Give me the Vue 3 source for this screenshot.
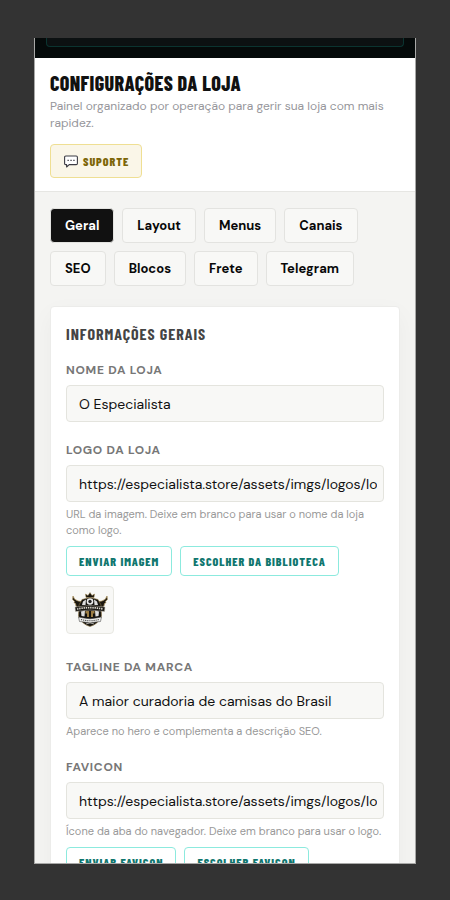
<script setup>
import { ref } from 'vue'

const tabs = ['Geral', 'Layout', 'Menus', 'Canais', 'SEO', 'Blocos', 'Frete', 'Telegram']
const active = ref('Geral')
const storeName = ref('O Especialista')
const logoUrl = ref('https://especialista.store/assets/imgs/logos/logo.png')
const tagline = ref('A maior curadoria de camisas do Brasil')
const faviconUrl = ref('https://especialista.store/assets/imgs/logos/logo.png')
</script>

<template>
  <div class="page">
    <div class="window">
      <div class="topbar"><div class="topbar-box"></div></div>

      <header class="header">
        <h1 class="title">Configurações da loja</h1>
        <p class="subtitle">Painel organizado por operação para gerir sua loja com mais rapidez.</p>
        <button type="button" class="support">
          <svg class="support-icon" viewBox="0 0 14 13" aria-hidden="true">
            <path d="M1.800 1h10.400q1.200 0 1.200 1.200v6.200q0 1.200-1.200 1.200H5.200L2.600 12V9.600H1.800Q.6 9.600.6 8.400V2.200Q.6 1 1.800 1Z" fill="#fff" stroke="#3c3c44" stroke-width="1.100" stroke-linejoin="round" />
            <path d="M3.500 4.700h1.300v1.300H3.500zM6.400 4.700h1.300v1.300H6.400zM9.300 4.700h1.300v1.300H9.300z" fill="#3c3c44" />
          </svg>
          <span>Suporte</span>
        </button>
      </header>

      <main class="main">
        <nav class="tabs">
          <button
            v-for="tab in tabs"
            :key="tab"
            type="button"
            class="tab"
            :class="{ active: tab === active }"
            @click="active = tab"
          >{{ tab }}</button>
        </nav>

        <section class="card">
          <h2 class="card-title">Informações gerais</h2>

          <div class="field">
            <label class="label" for="store-name">Nome da loja</label>
            <input id="store-name" v-model="storeName" class="input" type="text" />
          </div>

          <div class="field">
            <label class="label" for="logo-url">Logo da loja</label>
            <input id="logo-url" v-model="logoUrl" class="input" type="text" />
            <p class="hint">URL da imagem. Deixe em branco para usar o nome da loja como logo.</p>
            <div class="actions">
              <button type="button" class="action">Enviar imagem</button>
              <button type="button" class="action">Escolher da biblioteca</button>
            </div>
            <div class="thumb">
              <svg class="crest" viewBox="0 0 36 36" aria-hidden="true">
                <path d="M1 4Q2 8 6 9L12 10 11 16 5 16Q5 14 3.500 13L4 12 2 10.500 2.600 9.500.6 7.500Z" fill="#1b1710" stroke="#a58a52" stroke-width=".7" />
                <path d="M35 4Q34 8 30 9L24 10 25 16 31 16Q31 14 32.500 13L32 12 34 10.500 33.400 9.500 35.400 7.500Z" fill="#1b1710" stroke="#a58a52" stroke-width=".7" />
                <path d="M14 5.500 13.500 2 16 3.500 18 .6 20 3.500 22.500 2 22 5.500Z" fill="#17130c" stroke="#a58a52" stroke-width=".5" />
                <path d="M18 5.500 26 7.500 29 13 29.500 24Q26 32.500 18 34.500 10 32.500 6.500 24L7 13 10 7.500Z" fill="#15130f" stroke="#8e7747" stroke-width=".6" />
                <path d="M11 9.500 14 7.500 13.500 13H10ZM25 9.500 22 7.500 22.500 13H26ZM9 19.500 13 18.500 12.500 24.500 9.500 24ZM27 19.500 23 18.500 23.500 24.500 26.500 24Z" fill="#dedede" />
                <circle cx="18" cy="9.500" r="3.300" fill="#eee" />
                <circle cx="18" cy="9.500" r="1.700" fill="#222" />
                <path d="M3 15Q18 12 33 15L32.500 19.500Q18 16.500 3.500 19.500Z" fill="#1a1814" stroke="#bcb7ab" stroke-width=".5" />
                <path d="M5 17Q18 14.400 31 17" fill="none" stroke="#ddd9cf" stroke-width="1.700" stroke-dasharray="1.400 .8" />
                <path d="M13.500 19H17V25H15V21.500H13.500ZM19 19H22.500V21.500H21V25H19Z" fill="#9b7c43" />
                <path d="M6.500 25 12 26Q18 27.500 24 26L29.500 25 28.500 29.500 24 30Q18 31.500 12 30L7.500 29.500Z" fill="#efefed" stroke="#333" stroke-width=".5" />
                <path d="M9 27.500Q18 30 27 27.500" fill="none" stroke="#444" stroke-width="1.100" stroke-dasharray="1.200 .9" />
                <path d="M14 32 18 30.800 22 32" fill="none" stroke="#d5d2ca" stroke-width=".8" />
              </svg>
            </div>
          </div>

          <div class="field">
            <label class="label" for="tagline">Tagline da marca</label>
            <input id="tagline" v-model="tagline" class="input" type="text" />
            <p class="hint">Aparece no hero e complementa a descrição SEO.</p>
          </div>

          <div class="field">
            <label class="label" for="favicon-url">Favicon</label>
            <input id="favicon-url" v-model="faviconUrl" class="input" type="text" />
            <p class="hint">Ícone da aba do navegador. Deixe em branco para usar o logo.</p>
            <div class="actions">
              <button type="button" class="action">Enviar favicon</button>
              <button type="button" class="action">Escolher favicon</button>
            </div>
          </div>
        </section>
      </main>
    </div>
  </div>
</template>

<style>
body {
  margin: 0;
  background: #333;
}
</style>

<style scoped>
.page {
  box-sizing: border-box;
  height: 100vh;
  padding: 38px 34px 36px;
  background: #333;
  font-family: "DM Sans", Inter, "Liberation Sans", sans-serif;
  color: #111;
}
.page *,
.page *::before {
  box-sizing: border-box;
}
.window {
  height: 100%;
  overflow: hidden;
  border: solid #a8a8a7;
  border-width: 0 1px 1px;
  background: #f4f4f2;
}
.topbar {
  height: 20px;
  padding: 0 11px;
  background: #050a0a;
}
.topbar-box {
  height: 9px;
  border: 1px solid #0b3430;
  border-top: 0;
  border-radius: 0 0 4px 4px;
  background: #0c1112;
}
.header {
  padding: 13px 15px;
  border-bottom: 1px solid #e6e6e3;
  background: #fff;
}
.title,
.card-title,
.support,
.action {
  font-family: "Barlow Condensed", "Roboto Condensed", "Liberation Sans Narrow", "Liberation Sans", sans-serif;
  font-weight: 800;
  text-transform: uppercase;
}
.title {
  margin: 0;
  font-size: 20px;
  line-height: 24px;
  letter-spacing: 0.02em;
}
.subtitle {
  margin: 3px 0 12px;
  font-size: 12px;
  line-height: 17px;
  color: #96969b;
}
.support {
  display: flex;
  align-items: center;
  gap: 5px;
  height: 34px;
  padding: 0 12px 0 13px;
  border: 1px solid #efdf93;
  border-radius: 4px;
  background: #faf6e8;
  color: #7d6608;
  font-size: 12px;
  letter-spacing: 0.08em;
}
.support-icon {
  width: 14px;
  height: 13px;
}
.main {
  padding: 16px 15px;
}
.tabs {
  display: flex;
  flex-wrap: wrap;
  gap: 8px;
}
.tab {
  height: 35px;
  padding: 0 14px;
  border: 1px solid #e3e3e0;
  border-radius: 4px;
  background: #f8f8f6;
  color: #080808;
  font-family: inherit;
  font-size: 13px;
  font-weight: 700;
}
.tab.active {
  background: #111;
  color: #fff;
}
.card {
  display: flex;
  flex-direction: column;
  gap: 19px;
  margin-top: 20px;
  padding: 17px 15px;
  border: 1px solid #ececea;
  border-radius: 4px;
  background: #fff;
  box-shadow: 0 8px 24px rgba(0, 0, 0, 0.04);
}
.card-title {
  margin: 0 0 -2px;
  font-size: 16px;
  font-weight: 700;
  line-height: 20px;
  letter-spacing: 0.06em;
  color: #444;
}
.field {
  display: flex;
  flex-direction: column;
}
.label {
  margin-bottom: 6px;
  font-size: 12px;
  font-weight: 700;
  line-height: 18px;
  letter-spacing: 0.06em;
  text-transform: uppercase;
  color: #777;
}
.input {
  width: 100%;
  height: 37px;
  padding: 0 6px 0 12px;
  border: 1px solid #e4e4de;
  border-radius: 4px;
  background: #f8f8f6;
  color: #111;
  font-family: inherit;
  font-size: 14px;
}
.hint {
  margin: 4px 0 0;
  font-size: 11px;
  line-height: 16px;
  color: #999;
}
.actions {
  display: flex;
  flex-wrap: wrap;
  gap: 8px;
  margin-top: 8px;
}
.action {
  height: 30px;
  padding: 0 12px;
  border: 1px solid #8ceade;
  border-radius: 4px;
  background: #fff;
  color: #0f766e;
  font-size: 12px;
  letter-spacing: 0.08em;
}
.thumb {
  display: grid;
  place-items: center;
  width: 48px;
  height: 48px;
  margin: 10px 0 5px;
  border: 1px solid #e8e8e2;
  border-radius: 4px;
  background: #f8f8f6;
}
.crest {
  width: 36px;
  height: 36px;
}
</style>
